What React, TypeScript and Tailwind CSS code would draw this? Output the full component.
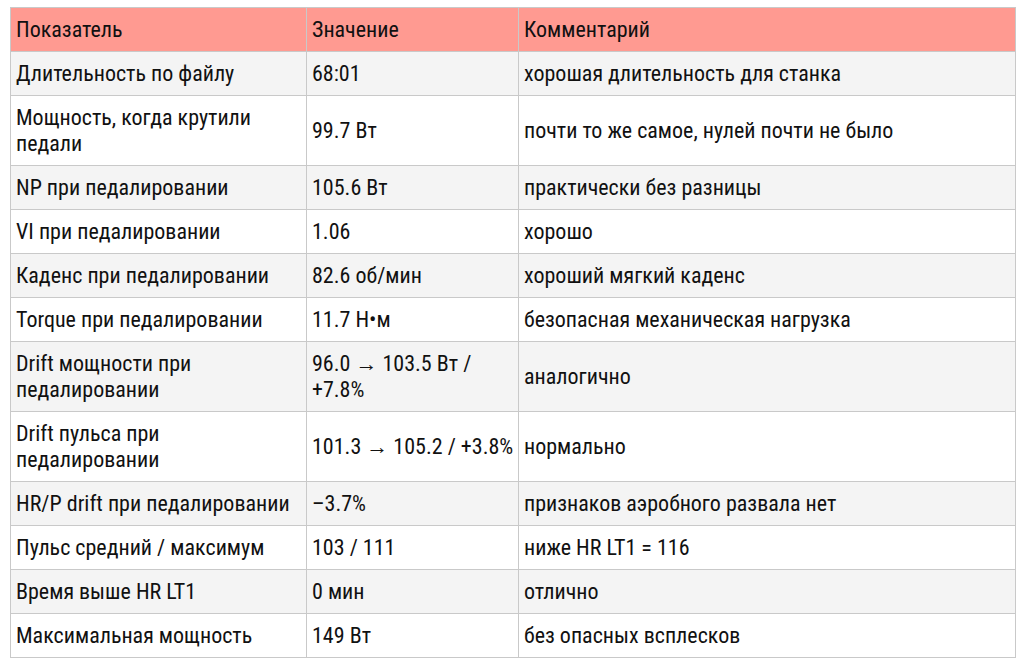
const rows: [string, string, string][] = [
  ["Длительность по файлу", "68:01", "хорошая длительность для станка"],
  ["Мощность, когда крутили\nпедали", "99.7 Вт", "почти то же самое, нулей почти не было"],
  ["NP при педалировании", "105.6 Вт", "практически без разницы"],
  ["VI при педалировании", "1.06", "хорошо"],
  ["Каденс при педалировании", "82.6 об/мин", "хороший мягкий каденс"],
  ["Torque при педалировании", "11.7 Н•м", "безопасная механическая нагрузка"],
  ["Drift мощности при\nпедалировании", "96.0 → 103.5 Вт /\n+7.8%", "аналогично"],
  ["Drift пульса при\nпедалировании", "101.3 → 105.2 / +3.8%", "нормально"],
  ["HR/P drift при педалировании", "–3.7%", "признаков аэробного развала нет"],
  ["Пульс средний / максимум", "103 / 111", "ниже HR LT1 = 116"],
  ["Время выше HR LT1", "0 мин", "отлично"],
  ["Максимальная мощность", "149 Вт", "без опасных всплесков"],
];

const cell = "border border-[#c9c9c9] px-[5px] pt-[9px] pb-[8px] align-middle whitespace-pre";

export default function App() {
  return (
    <div className="min-h-[659px] bg-white pl-[10px] pt-[7px] font-['Roboto',sans-serif] font-stretch-condensed text-[22px] leading-[26px] font-[450] text-[#111111]">
      <table className="w-[1006px] table-fixed border-collapse">
        <colgroup>
          <col className="w-[296px]" />
          <col className="w-[212px]" />
          <col />
        </colgroup>
        <thead>
          <tr className="bg-[#ff9a91]">
            <th className={`${cell} text-left font-[450]`}>Показатель</th>
            <th className={`${cell} text-left font-[450]`}>Значение</th>
            <th className={`${cell} text-left font-[450]`}>Комментарий</th>
          </tr>
        </thead>
        <tbody>
          {rows.map((r, i) => (
            <tr key={i} className={i % 2 === 0 ? "bg-[#f4f4f4]" : "bg-white"}>
              <td className={cell}>{r[0]}</td>
              <td className={cell}>{r[1]}</td>
              <td className={cell}>{r[2]}</td>
            </tr>
          ))}
        </tbody>
      </table>
    </div>
  );
}
